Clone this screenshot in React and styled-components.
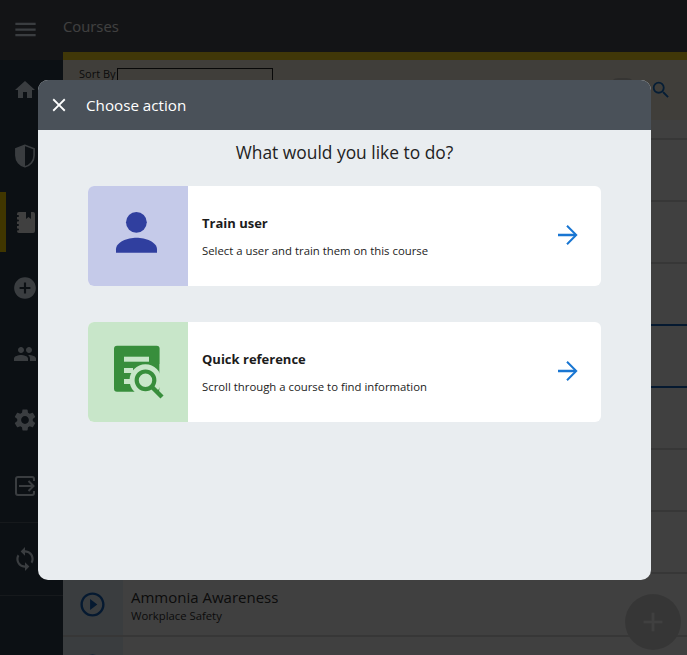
import React from "react"
import styled, { createGlobalStyle } from "styled-components"
import {
  MdHome,
  MdAddCircle,
  MdPeople,
  MdSettings,
  MdSync,
  MdSearch,
  MdClose,
  MdPlayCircleOutline,
  MdAdd,
  MdMenu,
} from "react-icons/md"

const GlobalStyle = createGlobalStyle`
  html, body {
    margin: 0;
    height: 100%;
    overflow: hidden;
  }
  * {
    box-sizing: border-box;
  }
  body {
    font-family: "Open Sans", "Noto Sans", "Liberation Sans", sans-serif;
  }
`

const Page = styled.div`
  position: relative;
  display: flex;
  width: 687px;
  height: 655px;
  overflow: hidden;
  background: #fff;
`

const LeftColumn = styled.div`
  display: flex;
  flex-direction: column;
  flex: 0 0 63px;
`

const MenuCell = styled.div`
  display: flex;
  align-items: center;
  justify-content: center;
  flex: 0 0 60px;
  padding-right: 13px;
  background: #4c5058;
  color: #e6f2ff;
  svg {
    margin-top: -2px;
  }
`

const Sidebar = styled.nav`
  flex: 1;
  display: flex;
  flex-direction: column;
  gap: 6px;
  background: #304050;
`

const NavItem = styled.div`
  display: flex;
  flex: 0 0 60px;
  align-items: center;
  justify-content: center;
  color: ${(p) => (p.$active ? "#fff" : "#e6f2ff")};
  border-left: 6px solid ${(p) => (p.$active ? "#ffd600" : "transparent")};
  padding-right: 19px;
`

const SyncItem = styled(NavItem)`
  flex: 0 0 74px;
  border-top: 1px solid #ffffff30;
  border-bottom: 1px solid #ffffff30;
  border-left: 0;
  padding-right: 13px;
`

const Main = styled.main`
  flex: 1;
  display: flex;
  flex-direction: column;
  min-width: 0;
`

const TopBar = styled.header`
  display: flex;
  align-items: center;
  flex: 0 0 52px;
  background: #4c5058;
  color: #fff;
  font-size: 14.8px;
  padding-bottom: 1px;
`

const AccentBar = styled.div`
  flex: 0 0 8px;
  background: #ffdc20;
`

const SortBar = styled.div`
  display: flex;
  flex: 0 0 60px;
  align-items: flex-start;
  padding: 8px 15px 0 16px;
  background: #fff8e8;
  color: #333;
  font-size: 11px;
`

const SortLabel = styled.span`
  line-height: 12px;
  margin-right: 1px;
`

const SortBox = styled.div`
  width: 156px;
  height: 28px;
  border: 1px solid #222;
`

const SortPill = styled.div`
  width: 25px;
  height: 24px;
  margin: 10px 15px 0 auto;
  border-radius: 8px;
  background: #d8d4cc;
`

const SearchButton = styled.div`
  margin-top: 11px;
  color: #1976d2;
  line-height: 0;
`

const CourseList = styled.div`
  flex: 1;
  overflow: hidden;
`

const CourseRow = styled.div`
  display: flex;
  height: 62.125px;
  border-bottom: 2px solid ${(p) => (p.$selected ? "#1565c0" : "#dcdcdc")};
  &:first-child {
    height: 19.5px;
  }
`

const PlayCell = styled.div`
  display: flex;
  align-items: center;
  justify-content: center;
  flex: 0 0 60px;
  padding-right: 2px;
  background: #e8f4fa;
  color: #1565c0;
`

const CourseText = styled.div`
  display: flex;
  flex-direction: column;
  justify-content: center;
  padding-left: 8px;
  padding-top: 1px;
  color: #333;
`

const CourseTitle = styled.div`
  font-size: 15px;
  line-height: 22px;
`

const CourseSubtitle = styled.div`
  font-size: 11.3px;
  line-height: 16px;
`

const Fab = styled.div`
  position: absolute;
  right: 6px;
  bottom: 5px;
  display: flex;
  align-items: center;
  justify-content: center;
  width: 56px;
  height: 56px;
  border-radius: 50%;
  background: #d8d8d8;
  color: #fff;
`

const Scrim = styled.div`
  position: absolute;
  inset: 0;
  display: flex;
  padding: 80px 36px 75px 38px;
  background: rgba(0, 0, 0, 0.75);
`

const Dialog = styled.section`
  flex: 1;
  display: flex;
  flex-direction: column;
  overflow: hidden;
  border-radius: 10px;
  background: #e9edf0;
`

const DialogHeader = styled.div`
  display: flex;
  align-items: center;
  flex: 0 0 50px;
  padding-left: 10px;
  background: #4a5159;
  color: #fff;
  font-size: 15.2px;
`

const CloseButton = styled.div`
  display: flex;
  width: 38px;
  line-height: 0;
`

const DialogBody = styled.div`
  flex: 1;
  display: flex;
  flex-direction: column;
  gap: 36px;
  padding: 0 50px;
`

const Question = styled.h2`
  margin: 10px 0 -14px;
  font-size: 17.4px;
  line-height: 24px;
  font-weight: 400;
  text-align: center;
  color: #222;
`

const ActionCard = styled.div`
  display: flex;
  align-items: stretch;
  height: 100px;
  border-radius: 6px;
  overflow: hidden;
  background: #fff;
`

const ActionIcon = styled.div`
  flex: 0 0 100px;
  background: ${(p) => p.$tint};
  line-height: 0;
`

const ActionText = styled.div`
  flex: 1;
  padding: 27px 0 0 14px;
  color: #1c1c1c;
`

const ActionTitle = styled.div`
  font-size: 13px;
  line-height: 20px;
  font-weight: 700;
`

const ActionDescription = styled.div`
  margin-top: 10px;
  font-size: 11.35px;
  line-height: 16px;
`

const ArrowSlot = styled.div`
  display: flex;
  align-items: center;
  padding: 0 23px 3px 0;
  line-height: 0;
`

const ShieldIcon = () => (
  <svg width="20" height="24" viewBox="0 0 22 26" fill="none">
    <path
      d="M11 1.2 1 5v7.5c0 6 4.2 10.9 10 12.3 5.8-1.4 10-6.3 10-12.3V5L11 1.2Z"
      stroke="currentColor"
      strokeWidth="1.8"
    />
    <path d="M11 1.2 1 5v7.5c0 6 4.2 10.9 10 12.3V1.2Z" fill="currentColor" />
  </svg>
)

const NotebookIcon = () => (
  <svg width="20" height="21" viewBox="0 0 20 21" fill="currentColor">
    <path d="M2 2a2 2 0 0 1 2-2h7v7l2.5-2 2.5 2V0h2a2 2 0 0 1 2 2v17a2 2 0 0 1-2 2H4a2 2 0 0 1-2-2Z" />
    <rect x="0" y="3" width="4" height="2" rx="1" fill="#304050" />
    <rect x="0" y="7.5" width="4" height="2" rx="1" fill="#304050" />
    <rect x="0" y="12" width="4" height="2" rx="1" fill="#304050" />
    <rect x="0" y="16.5" width="4" height="2" rx="1" fill="#304050" />
  </svg>
)

const ExitIcon = () => (
  <svg width="20" height="20" viewBox="0 0 20 20" fill="none" stroke="currentColor">
    <path
      d="M19 5V3a2 2 0 0 0-2-2H3a2 2 0 0 0-2 2v14a2 2 0 0 0 2 2h14a2 2 0 0 0 2-2v-2"
      strokeWidth="2"
    />
    <path d="M4 10h15M13.5 5l5 5-5 5" strokeWidth="2" />
  </svg>
)

const UserArt = () => (
  <svg width="100" height="100" viewBox="0 0 100 100" fill="#303f9f">
    <circle cx="48.4" cy="36.3" r="10.4" />
    <path d="M28 66.8v-3.6C28 56 39.5 51.7 48.5 51.7S69 56 69 63.2v3.6Z" />
  </svg>
)

const ReferenceArt = () => (
  <svg width="100" height="100" viewBox="0 0 100 100">
    <rect x="26" y="23.7" width="45.6" height="46" rx="3" fill="#388e3c" />
    <g fill="#c8e6c9">
      <rect x="36" y="34.7" width="25" height="5" />
      <rect x="36" y="46" width="9" height="5" />
      <rect x="36" y="57" width="6" height="5" />
      <circle cx="57.5" cy="58.3" r="16" />
      <rect x="71.6" y="42" width="10" height="32" />
      <rect x="42" y="70" width="40" height="10" />
    </g>
    <circle cx="57.5" cy="58.3" r="8.8" fill="none" stroke="#388e3c" strokeWidth="4.2" />
    <path d="M63.5 64.5 74 75" stroke="#388e3c" strokeWidth="4.4" />
  </svg>
)

const ArrowIcon = () => (
  <svg width="20" height="20" viewBox="0 0 20 20" fill="none" stroke="#1976d2">
    <path d="M0 10h18" strokeWidth="2.4" />
    <path d="M9 .8 18.2 10 9 19.2" strokeWidth="2" />
  </svg>
)

const courses = [
  { id: 1 },
  { id: 2 },
  { id: 3 },
  { id: 4, selected: true },
  { id: 5, selected: true },
  { id: 6 },
  { id: 7 },
  { id: 8 },
  { id: 9, title: "Ammonia Awareness", subtitle: "Workplace Safety" },
  { id: 10, title: "Area Management", subtitle: "Workplace Safety" },
]

const actions = [
  {
    title: "Train user",
    description: "Select a user and train them on this course",
    tint: "#c5cae9",
    art: <UserArt />,
  },
  {
    title: "Quick reference",
    description: "Scroll through a course to find information",
    tint: "#c8e6c9",
    art: <ReferenceArt />,
  },
]

export default function App() {
  return (
    <Page>
      <GlobalStyle />
      <LeftColumn>
        <MenuCell>
          <MdMenu size={27} />
        </MenuCell>
        <Sidebar>
          <NavItem>
            <MdHome size={24} />
          </NavItem>
          <NavItem>
            <ShieldIcon />
          </NavItem>
          <NavItem $active>
            <NotebookIcon />
          </NavItem>
          <NavItem>
            <MdAddCircle size={26} />
          </NavItem>
          <NavItem>
            <MdPeople size={24} />
          </NavItem>
          <NavItem>
            <MdSettings size={26} />
          </NavItem>
          <NavItem>
            <ExitIcon />
          </NavItem>
          <SyncItem>
            <MdSync size={26} />
          </SyncItem>
        </Sidebar>
      </LeftColumn>
      <Main>
        <TopBar>Courses</TopBar>
        <AccentBar />
        <SortBar>
          <SortLabel>Sort By</SortLabel>
          <SortBox />
          <SortPill />
          <SearchButton>
            <MdSearch size={22} />
          </SearchButton>
        </SortBar>
        <CourseList>
          {courses.map((course) => (
            <CourseRow key={course.id} $selected={course.selected}>
              <PlayCell>{course.title && <MdPlayCircleOutline size={29} />}</PlayCell>
              <CourseText>
                <CourseTitle>{course.title}</CourseTitle>
                <CourseSubtitle>{course.subtitle}</CourseSubtitle>
              </CourseText>
            </CourseRow>
          ))}
        </CourseList>
      </Main>
      <Fab>
        <MdAdd size={32} />
      </Fab>
      <Scrim>
        <Dialog>
          <DialogHeader>
            <CloseButton>
              <MdClose size={22} />
            </CloseButton>
            Choose action
          </DialogHeader>
          <DialogBody>
            <Question>What would you like to do?</Question>
            {actions.map((action) => (
              <ActionCard key={action.title}>
                <ActionIcon $tint={action.tint}>{action.art}</ActionIcon>
                <ActionText>
                  <ActionTitle>{action.title}</ActionTitle>
                  <ActionDescription>{action.description}</ActionDescription>
                </ActionText>
                <ArrowSlot>
                  <ArrowIcon />
                </ArrowSlot>
              </ActionCard>
            ))}
          </DialogBody>
        </Dialog>
      </Scrim>
    </Page>
  )
}
